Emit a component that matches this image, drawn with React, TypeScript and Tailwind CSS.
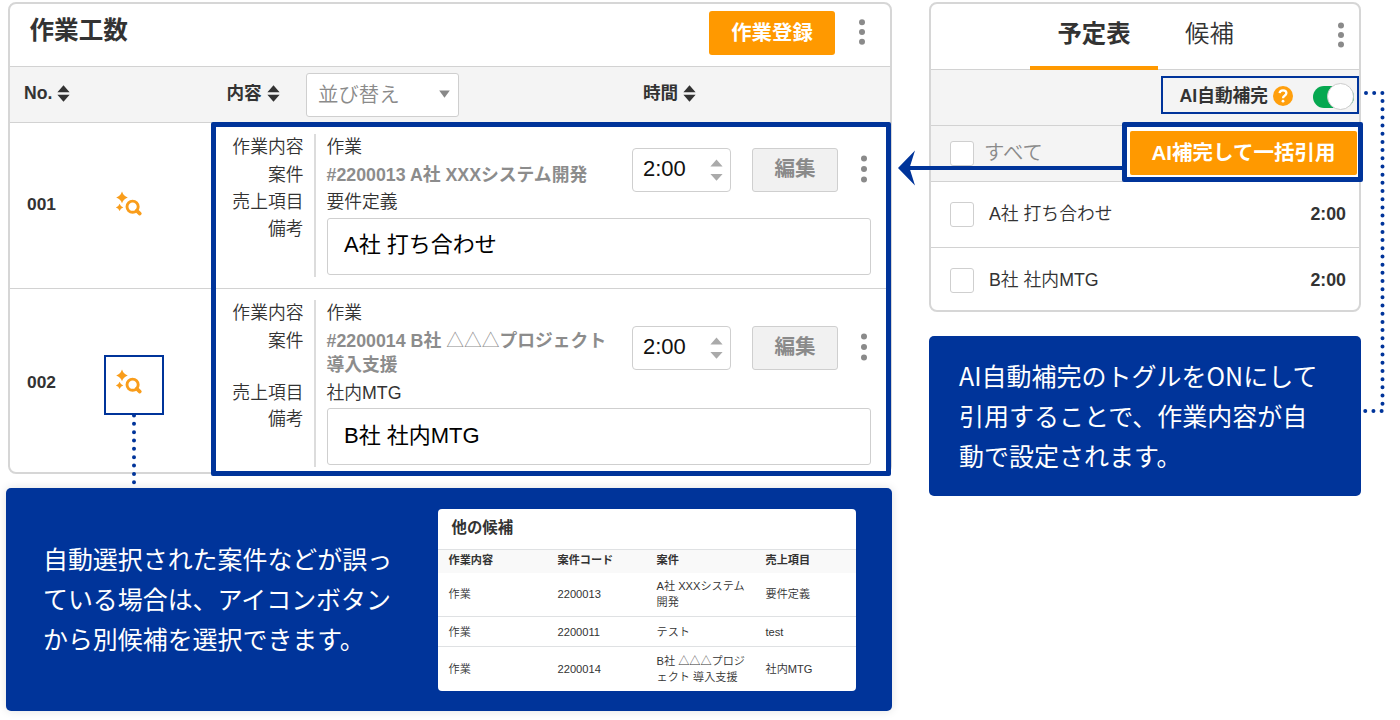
import React from "react";

const DOT_FILL = "#8a8a8a";

function SortIcon() {
  return (
    <svg width="13" height="17" viewBox="0 0 13 17" className="shrink-0">
      <path d="M6.5 0.3 12.6 7.2H0.4Z M6.5 16.7 0.4 9.8H12.6Z" fill="#333" />
    </svg>
  );
}

function Kebab({ pitch }: { pitch: number }) {
  return (
    <svg width="8" height="30" viewBox="0 0 8 30" className="shrink-0">
      {[-1, 0, 1].map((n) => (
        <circle key={n} cx="4" cy={15 + n * pitch} r="3" fill={DOT_FILL} />
      ))}
    </svg>
  );
}

function SparkSearch() {
  return (
    <svg width="56" height="56" viewBox="2 1.6 56 56">
      <g fill="#f99d1b">
        <path d="M18 14.2Q19.4 18.6 23.8 20 19.4 21.4 18 25.8 16.6 21.4 12.2 20 16.6 18.6 18 14.2Z" />
        <path d="M15.6 26.3Q16.5 29.1 19.3 30 16.5 30.9 15.6 33.7 14.7 30.9 11.9 30 14.7 29.1 15.6 26.3Z" />
      </g>
      <circle cx="28.6" cy="29.3" r="5.6" fill="none" stroke="#f99d1b" strokeWidth="2.9" />
      <path d="M32.7 33.3 35.8 36.2" stroke="#f99d1b" strokeWidth="3.7" strokeLinecap="round" />
    </svg>
  );
}

function Field({ label, children }: { label: string; children: React.ReactNode }) {
  return (
    <div className="flex">
      <div className="w-[98px] shrink-0 border-r-2 border-[#dcdcdc] pt-px pr-[10.5px] text-right">{label}</div>
      <div className="w-[300px] pt-px pb-[2px] pl-[10.5px]">{children}</div>
    </div>
  );
}

type Work = {
  no: string;
  project: React.ReactNode;
  item: string;
  note: string;
  rowClass: string;
  noClass: string;
  iconClass: string;
  controlsClass: string;
};

const works: Work[] = [
  {
    no: "001",
    project: "#2200013 A社 XXXシステム開発",
    item: "要件定義",
    note: "A社 打ち合わせ",
    rowClass: "h-[166px] border-b-[1.5px] border-[#d2d2d2]",
    noClass: "mt-[69px]",
    iconClass: "mt-[54px] border-transparent",
    controlsClass: "mt-[14px]",
  },
  {
    no: "002",
    project: (
      <>
        #2200014 B社 <span className="font-light">△△△</span>プロジェクト
        <br />
        導入支援
      </>
    ),
    item: "社内MTG",
    note: "B社 社内MTG",
    rowClass: "h-[183px]",
    noClass: "mt-[81px]",
    iconClass: "mt-[66px] border-[#00349a]",
    controlsClass: "mt-[26px]",
  },
];

function WorkRow({ w }: { w: Work }) {
  return (
    <div className={`flex items-start ${w.rowClass}`}>
      <div className={`w-[94px] pl-[17px] text-[17.4px] leading-6 font-bold ${w.noClass}`}>{w.no}</div>
      <div className={`size-[60px] shrink-0 border-2 ${w.iconClass}`}>
        <SparkSearch />
      </div>
      <div className="ml-[54px] flex-1 pt-[11px] text-[17.8px] leading-[24.5px] font-[350] text-[#333]">
        <div className="flex">
          <div>
            <Field label="作業内容">作業</Field>
            <Field label="案件">
              <span className="font-bold whitespace-nowrap text-[#8c8c8c]">{w.project}</span>
            </Field>
            <Field label="売上項目">{w.item}</Field>
          </div>
          <div className={`ml-[16px] flex items-start ${w.controlsClass}`}>
            <div className="flex h-[44px] w-[99px] items-center justify-between rounded-[4px] border-[1.5px] border-[#cfcfcf] bg-white pr-[7px] pb-px pl-[10px]">
              <span className="text-[22px] text-[#111]">2:00</span>
              <svg width="13" height="22" viewBox="0 0 13 22">
                <path d="M6.5 0.5 12.6 7.4H0.4Z M6.5 21.8 0.4 14.9H12.6Z" fill="#aaa" />
              </svg>
            </div>
            <button className="ml-[21px] h-[44px] w-[86px] rounded-[3px] border-[1.5px] border-[#cfcfcf] bg-[#f1f1f1] pb-px text-[20.6px] font-bold text-[#8a8a8a]">
              編集
            </button>
            <div className="ml-[22px] pt-[6px]">
              <Kebab pitch={10.4} />
            </div>
          </div>
        </div>
        <div className="flex h-[60px]">
          <div className="w-[98px] shrink-0 border-r-2 border-[#dcdcdc] pr-[10.5px] text-right">備考</div>
          <div className="mt-px ml-[10.5px] flex h-[57px] w-[544px] items-center rounded-[3px] border-[1.5px] border-[#cfcfcf] bg-white pb-px pl-[16.5px] text-[22px] font-normal text-black">
            {w.note}
          </div>
        </div>
      </div>
    </div>
  );
}

function WorkPanel() {
  return (
    <section className="ml-[2px] flex h-[472px] w-[884px] flex-col rounded-[8px] border-2 border-[#d6d6d6] bg-white">
      <div className="flex h-[63px] shrink-0 items-start border-b-[1.5px] border-[#d2d2d2]">
        <h1 className="mt-[9px] ml-[19.5px] text-[24.6px] leading-9 font-bold">作業工数</h1>
        <button className="mt-[7px] ml-auto h-[44px] w-[126px] rounded-[3px] bg-[#ff9900] text-[20.4px] font-bold text-white">
          作業登録
        </button>
        <div className="mt-[13px] mr-[24px] ml-[23px]">
          <Kebab pitch={9.7} />
        </div>
      </div>
      <div className="flex h-[56px] shrink-0 items-center border-b-[1.5px] border-[#d2d2d2] bg-[#f4f4f4] text-[17.6px] font-bold">
        <div className="flex w-[216.5px] items-center gap-[5px] pb-[2px] pl-[14px]">
          No.
          <SortIcon />
        </div>
        <div className="flex w-[79.5px] items-center gap-[5px] pb-[2px]">
          内容
          <SortIcon />
        </div>
        <div className="flex h-[44px] w-[153px] items-center justify-between rounded-[3px] border-[1.5px] border-[#cfcfcf] bg-white pr-[8px] pl-[11px] text-[20.4px] font-[350] text-[#8a8a8a]">
          <span className="pt-px">並び替え</span>
          <svg width="11" height="8" viewBox="0 0 11 8" className="mb-[2px]">
            <path d="M0.2 0.5H10.8L5.5 7.8Z" fill="#888" />
          </svg>
        </div>
        <div className="ml-[184px] flex items-center gap-[5px] pb-[2px]">
          時間
          <SortIcon />
        </div>
      </div>
      <div className="relative">
        {works.map((w) => (
          <WorkRow key={w.no} w={w} />
        ))}
        <div className="absolute -top-[1px] left-[201px] h-[354px] w-[680px] rounded-[2px] border-[5px] border-[#00349a]" />
      </div>
    </section>
  );
}

const candidates = [
  { work: "作業", code: "2200013", project: ["A社 XXXシステム", "開発"], item: "要件定義", cls: "h-[45px] border-b" },
  { work: "作業", code: "2200011", project: ["テスト"], item: "test", cls: "h-[30px] border-b" },
  { work: "作業", code: "2200014", project: ["B社 △△△プロジ", "ェクト 導入支援"], item: "社内MTG", cls: "h-[44px]" },
];

function CandidateCallout() {
  return (
    <section className="mt-[14px] flex h-[223px] w-[886px] rounded-[5px] bg-[#00349a] shadow-[0_0_10px_rgba(0,0,0,0.12)]">
      <p className="mt-[50px] ml-[37px] w-[394.5px] font-['Noto_Sans_CJK_JP',sans-serif] text-[24.95px] leading-[40px] text-white">
        自動選択された案件などが誤っ
        <br />
        ている場合は、アイコンボタン
        <br />
        から別候補を選択できます。
      </p>
      <div className="mt-[20.5px] flex h-[182.5px] w-[418px] flex-col overflow-hidden rounded-[4px] bg-white text-[11.15px] leading-[15.5px] font-[350]">
        <h2 className="h-[41px] shrink-0 border-b border-[#dfe1e3] pt-[7px] pl-[14px] text-[15.4px] leading-6 font-bold">他の候補</h2>
        <div className="grid h-[23px] shrink-0 grid-cols-[109px_99px_109px_1fr] items-center bg-[#f9f9f9] pl-[11px] font-bold">
          <span>作業内容</span>
          <span>案件コード</span>
          <span>案件</span>
          <span>売上項目</span>
        </div>
        {candidates.map((c) => (
          <div
            key={c.code}
            className={`grid grid-cols-[109px_99px_109px_1fr] items-center border-[#dfe1e3] pt-px pl-[11px] ${c.cls}`}
          >
            <span>{c.work}</span>
            <span>{c.code}</span>
            <span>
              {c.project.map((line) => (
                <span key={line} className="block whitespace-nowrap">
                  {line}
                </span>
              ))}
            </span>
            <span>{c.item}</span>
          </div>
        ))}
      </div>
    </section>
  );
}

function CheckBox() {
  return <span className="size-[24.5px] shrink-0 rounded-[3px] border-[1.5px] border-[#cfcfcf] bg-white" />;
}

function SchedulePanel() {
  return (
    <section className="relative h-[310px] w-[432px] rounded-[8px] border-2 border-[#d6d6d6] bg-white">
      <div className="flex h-[66px] items-start border-b-[1.5px] border-[#d2d2d2]">
        <div className="ml-[99px] h-[66px] w-[128px] border-b-4 border-[#ff9900] pt-[12px] text-center text-[24.4px] leading-9 font-bold">
          予定表
        </div>
        <div className="mt-[12px] ml-[27px] text-[24.4px] leading-9 font-[350]">候補</div>
        <div className="mt-[16px] mr-[14px] ml-auto">
          <Kebab pitch={9.5} />
        </div>
      </div>
      <div className="flex h-[56px] items-start justify-end border-b-[1.5px] border-[#d2d2d2] bg-[#f4f4f4]">
        <div className="mt-[6px] flex h-[38px] w-[198px] items-center border-2 border-[#00349a] pl-[16.5px]">
          <span className="pt-[3px] text-[17.7px] font-bold">AI自動補完</span>
          <span className="mt-[2px] ml-[5px] flex size-[20px] items-center justify-center rounded-full bg-[#ff9f0d]">
            <svg width="12" height="14" viewBox="0 0 12 14">
              <path
                d="M2.6 4.2C2.8 2.2 4.2 1.3 6 1.3c2 0 3.4 1.1 3.4 2.8 0 1.4-.8 2-1.8 2.7C6.5 7.5 6 7.9 6 9.2"
                fill="none"
                stroke="#fff"
                strokeWidth="2.3"
              />
              <circle cx="6" cy="12.2" r="1.4" fill="#fff" />
            </svg>
          </span>
          <span className="mt-[3px] ml-[20px] flex h-[22px] w-[41px] items-center justify-end rounded-full bg-[#06a850]">
            <span className="size-[27px] shrink-0 rounded-full border border-[#ccc] bg-white" />
          </span>
        </div>
      </div>
      <div className="flex h-[56px] items-center border-b-[1.5px] border-[#d2d2d2] bg-[#f4f4f4] pl-[18.5px]">
        <CheckBox />
        <span className="ml-[10px] text-[20.4px] font-[350] text-[#8a8a8a]">すべて</span>
      </div>
      {["A社 打ち合わせ", "B社 社内MTG"].map((name, i) => (
        <div
          key={name}
          className={
            i === 0
              ? "flex h-[66px] items-center border-b-[1.5px] border-[#d2d2d2] pr-[13px] pl-[18.5px]"
              : "flex h-[62px] items-center pt-[3px] pr-[13px] pl-[18.5px]"
          }
        >
          <CheckBox />
          <span className="ml-[15px] text-[17.8px] font-[350]">{name}</span>
          <span className="ml-auto text-[17.8px] font-bold">2:00</span>
        </div>
      ))}
      <div className="absolute top-[118px] left-[191px] h-[60px] w-[241px] rounded-[2px] border-[5px] border-[#00349a] bg-white pt-[4px] pl-[3px]">
        <button className="h-[44px] w-[227px] rounded-[2px] bg-[#ff9900] text-[20.5px] font-bold text-white">
          AI補完して一括引用
        </button>
      </div>
    </section>
  );
}

export default function App() {
  return (
    <main
      className="relative flex h-[720px] w-[1400px] overflow-hidden bg-white pt-[2px] font-['Liberation_Sans','Noto_Sans_CJK_JP',sans-serif] text-[#333]"
      lang="ja"
    >
      <div className="ml-[6px] w-[886px] shrink-0">
        <WorkPanel />
        <CandidateCallout />
      </div>
      <div className="ml-[37px] w-[432px] shrink-0">
        <SchedulePanel />
        <p className="mt-[24px] h-[160px] rounded-[5px] bg-[#00349a] pt-[19px] pl-[30px] font-['Noto_Sans_CJK_JP',sans-serif] text-[25px] leading-[40px] text-white">
          AI自動補完のトグルをONにして
          <br />
          引用することで、作業内容が自
          <br />
          動で設定されます。
        </p>
      </div>
      <svg className="pointer-events-none absolute inset-0" width="1400" height="720" viewBox="0 0 1400 720">
        <g fill="none" stroke="#00349a" strokeWidth="4" strokeLinecap="round">
          <path d="M134 415.5V484" strokeDasharray="0 8.34" />
          <path d="M1366 93H1382.5V411H1365" strokeDasharray="0 8.18" />
        </g>
        <path d="M909 166H1124V170H909Z" fill="#00349a" />
        <path d="M898 168 915 150.500 909.500 168 915 185.500Z" fill="#00349a" />
      </svg>
    </main>
  );
}
